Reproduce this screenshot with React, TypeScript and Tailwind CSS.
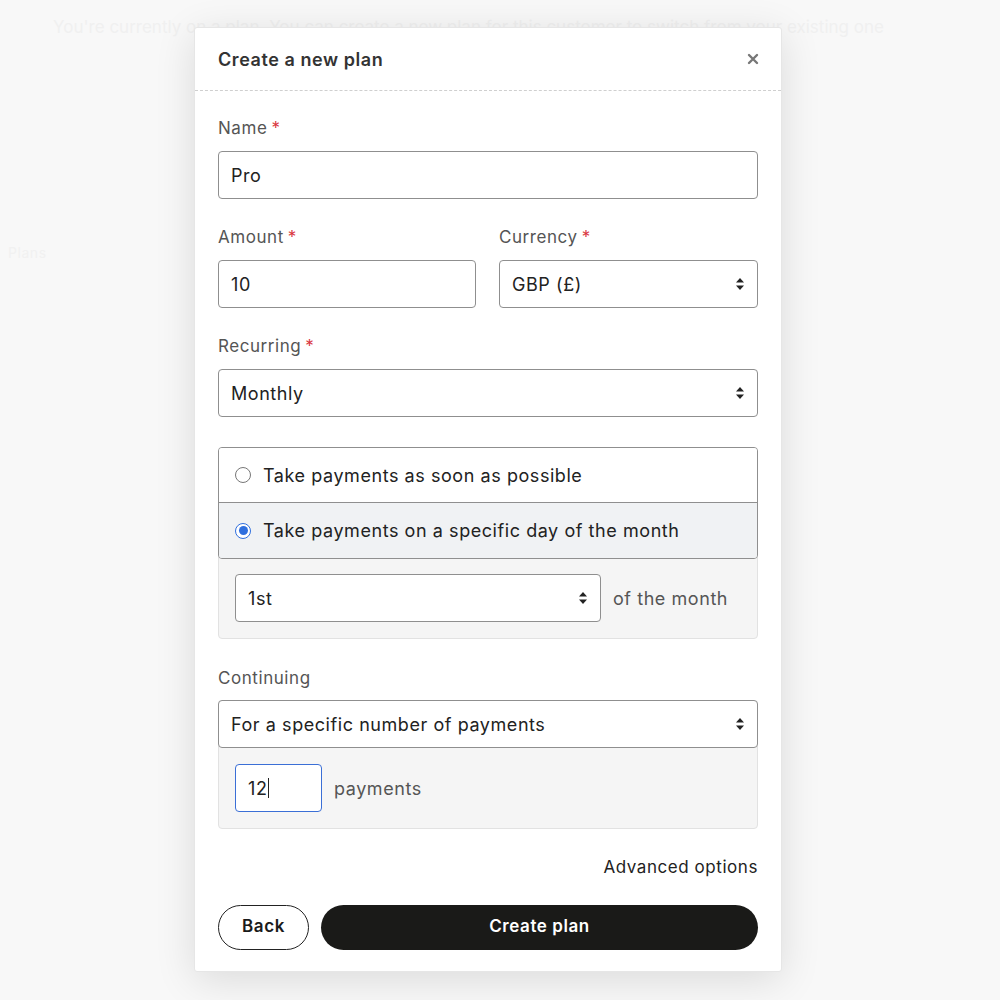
import React from "react";

function Arrows() {
  return (
    <svg width="10" height="14" viewBox="0 0 10 14" className="shrink-0">
      <path d="M5 1 L9 5.5 L1 5.5 Z" fill="#222" />
      <path d="M5 13 L9 8.5 L1 8.5 Z" fill="#222" />
    </svg>
  );
}

function Label({ text, req }: { text: string; req?: boolean }) {
  return (
    <div className="text-[17px] text-[#555] leading-[20px] mb-[13px]">
      {text}
      {req && <span className="text-[#d9363e] ml-[4px]">*</span>}
    </div>
  );
}

function Select({ value, className = "" }: { value: string; className?: string }) {
  return (
    <div
      className={`h-[48px] border border-[#8f8f8f] rounded-[4px] bg-white flex items-center justify-between pl-[12px] pr-[12px] text-[18px] text-[#222] ${className}`}
    >
      <span>{value}</span>
      <Arrows />
    </div>
  );
}

function Input({ value, className = "" }: { value: string; className?: string }) {
  return (
    <div
      className={`h-[48px] border border-[#8f8f8f] rounded-[4px] bg-white flex items-center px-[12px] text-[18px] text-[#222] ${className}`}
    >
      {value}
    </div>
  );
}

export default function App() {
  return (
    <div
      className="relative w-[1000px] h-[1000px] bg-[#f8f8f8] overflow-hidden tracking-[0.035em]"
      style={{ fontFamily: "Inter, 'Noto Sans', sans-serif" }}
    >
      <div className="absolute left-[53px] top-[15px] w-[870px] text-[17px] text-[#f0f0f0] whitespace-nowrap tracking-normal">
        You're currently on a plan. You can create a new plan for this customer to switch from your existing one
      </div>
      <div className="absolute left-[8px] top-[242px] text-[14px] text-[#f1f1f1]">Plans</div>

      <div className="absolute left-[194px] top-[27px] w-[588px] h-[945px] bg-white rounded-[3px] shadow-[0_8px_40px_rgba(0,0,0,0.12)] border border-[#e6e6e6]">
        <div className="h-[63px] flex items-center justify-between pl-[23px] pr-[22px] border-b border-dashed border-[#cfcfcf]">
          <div className="text-[18px] font-semibold text-[#333]">Create a new plan</div>
          <svg width="12" height="12" viewBox="0 0 12 12">
            <path d="M2 2 L10 10 M10 2 L2 10" stroke="#777" strokeWidth="2.4" strokeLinecap="round" />
          </svg>
        </div>

        <div className="px-[23px] pt-[27px]">
          <Label text="Name" req />
          <Input value="Pro" />

          <div className="flex gap-[23px] mt-[28px]">
            <div className="w-[258px]">
              <Label text="Amount" req />
              <Input value="10" />
            </div>
            <div className="flex-1">
              <Label text="Currency" req />
              <Select value="GBP (£)" />
            </div>
          </div>

          <div className="mt-[28px]">
            <Label text="Recurring" req />
            <Select value="Monthly" />
          </div>

          <div className="mt-[30px] rounded-[4px] border border-[#e2e2e2] bg-[#f5f5f5]">
            <div className="border border-[#8f8f8f] rounded-[4px] -m-px overflow-hidden">
              <div className="h-[55px] bg-white flex items-center px-[16px] text-[18px] text-[#222] border-b border-[#8f8f8f]">
                <span className="w-[16px] h-[16px] rounded-full border border-[#777] bg-white mr-[12px]" />
                Take payments as soon as possible
              </div>
              <div className="h-[55px] bg-[#f0f2f4] flex items-center px-[16px] text-[18px] text-[#222]">
                <span className="w-[16px] h-[16px] rounded-full border-[1.5px] border-[#2f6fde] bg-white mr-[12px] flex items-center justify-center">
                  <span className="w-[9px] h-[9px] rounded-full bg-[#2f6fde]" />
                </span>
                Take payments on a specific day of the month
              </div>
            </div>
            <div className="flex items-center px-[16px] pt-[16px] pb-[16px]">
              <Select value="1st" className="w-[366px]" />
              <span className="ml-[12px] text-[18px] text-[#555]">of the month</span>
            </div>
          </div>

          <div className="mt-[29px]">
            <div className="text-[17px] text-[#555] leading-[20px] mb-[12px]">Continuing</div>
            <div className="rounded-[4px] border border-[#e2e2e2] bg-[#f5f5f5]">
              <Select value="For a specific number of payments" className="-m-px" />
              <div className="flex items-center px-[16px] pt-[17px] pb-[16px]">
                <div className="w-[87px] h-[48px] rounded-[4px] border-[1.5px] border-[#3b6fd6] bg-white flex items-center px-[12px] text-[18px] text-[#222]">
                  12<span className="w-px h-[20px] bg-[#222] ml-[1px]" />
                </div>
                <span className="ml-[12px] text-[18px] text-[#555]">payments</span>
              </div>
            </div>
          </div>

          <div className="mt-[26px] flex justify-end text-[17px] text-[#222]">Advanced options</div>

          <div className="mt-[24px] flex gap-[12px]">
            <button className="w-[91px] h-[45px] rounded-full border border-[#222] bg-white text-[17px] font-semibold text-[#1a1a1a]">
              Back
            </button>
            <button className="flex-1 h-[45px] rounded-full bg-[#1a1a18] text-[17px] font-semibold text-white">
              Create plan
            </button>
          </div>
        </div>
      </div>
    </div>
  );
}
